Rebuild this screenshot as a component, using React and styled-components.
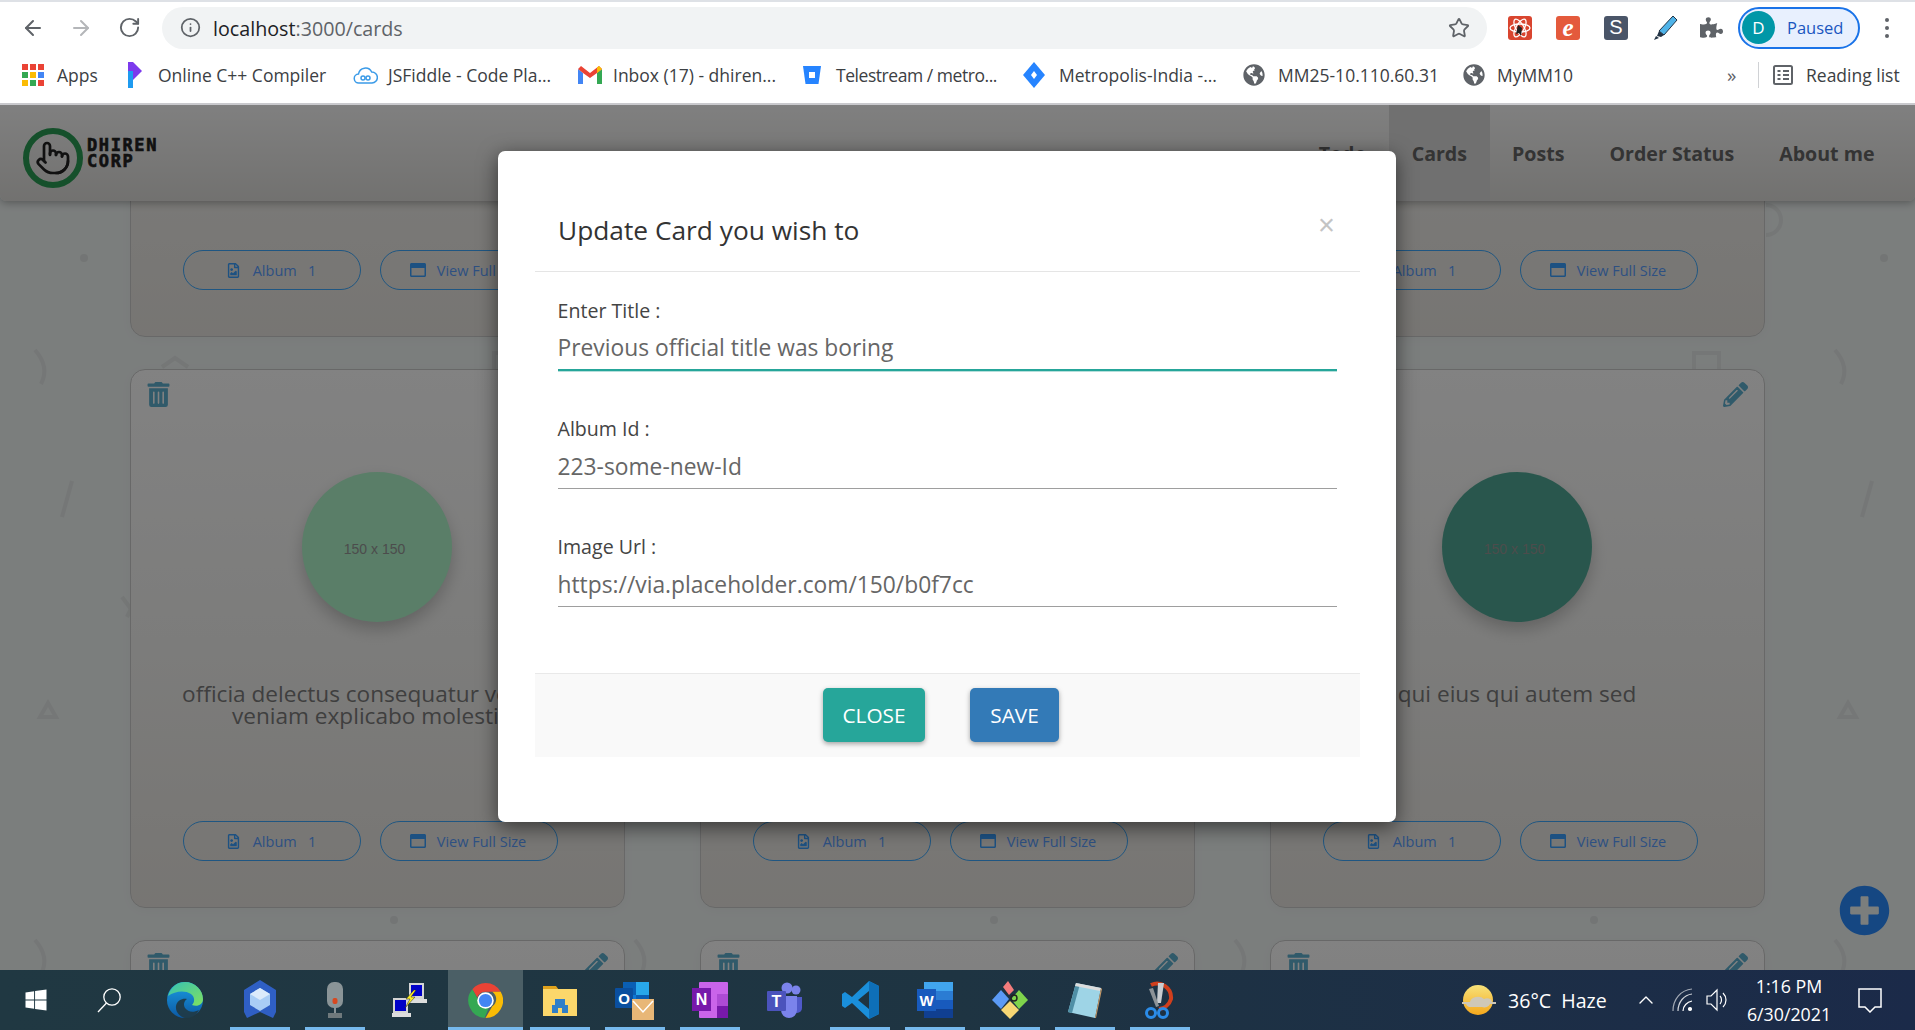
import React from "react";
import styled, { createGlobalStyle } from "styled-components";
import { ArrowLeft, ArrowRight, RotateCw, Info, Star, Pointer, ChevronUp } from "lucide-react";
import {
  FaTrashAlt, FaPencilAlt, FaRegFileImage, FaRegWindowMaximize, FaPlusCircle,
  FaPuzzlePiece, FaGlobeAmericas, FaWindows,
} from "react-icons/fa";

const UI = `"Open Sans", "Noto Sans", "Liberation Sans", sans-serif`;

const Global = createGlobalStyle`
  html, body { margin: 0; padding: 0; overflow: hidden; background: #fff; }
  * { box-sizing: border-box; }
`;

const Root = styled.div`
  width: 1915px; height: 1030px; display: flex; flex-direction: column;
  overflow: hidden; font-family: ${UI};
`;

/* ---------- browser chrome ---------- */
const Chrome = styled.header`
  height: 105px; flex: none; background: #fff; display: flex; flex-direction: column;
  border-top: 2px solid #dee1e6; border-bottom: 2px solid #c9c9cd;
`;
const Toolbar = styled.div`
  height: 48px; flex: none; display: flex; align-items: center; padding: 3px 0 0 0;
`;
const NavIcon = styled.span`
  width: 48px; flex: none; display: flex; justify-content: center; color: ${p => p.$c || "#5f6368"};
`;
const NavIcons = styled.div`
  width: 162px; flex: none; display: flex; padding-left: 9px;
`;
const UrlBar = styled.div`
  width: 1325px; height: 42px; flex: none; border-radius: 21px; background: #f1f3f4;
  display: flex; align-items: center; padding: 0 17px 0 18px; color: #5f6368;
`;
const UrlText = styled.div`
  margin-left: 12px; padding-top: 1px; font-size: 19.7px; color: #5f6368; flex: 1; white-space: nowrap;
  b { font-weight: 400; color: #202124; }
`;
const ExtRow = styled.div`
  display: flex; align-items: center; margin-left: 21px; height: 42px;
`;
const ExtSlot = styled.div`
  width: 48px; flex: none; display: flex; align-items: center; justify-content: flex-start;
`;
const ExtTile = styled.div`
  width: 24px; height: 24px; border-radius: 3px; background: ${p => p.$bg}; color: #fff;
  display: flex; align-items: center; justify-content: center; font-size: ${p => p.$fs || 18}px;
  font-style: ${p => p.$it ? "italic" : "normal"}; font-weight: ${p => p.$it ? 700 : 400};
  font-family: ${p => p.$it ? `"Liberation Serif", serif` : `"Liberation Sans", sans-serif`}; overflow: hidden;
`;
const Profile = styled.div`
  width: 122px; height: 42px; margin-left: -10px; flex: none; border-radius: 21px; border: 2px solid #1a73e8; background: #e8f0fe;
  display: flex; align-items: center; padding-left: 2px;
`;
const Avatar = styled.div`
  width: 33px; height: 33px; border-radius: 50%; background: #0097a7; color: #fff;
  display: flex; align-items: center; justify-content: center; font-size: 17px;
`;
const PausedText = styled.span`
  margin-left: 12px; color: #1a56c0; font-size: 16.5px;
`;
const Kebab = styled.div`
  margin-left: 25px; display: flex; flex-direction: column; gap: 4px;
  i { width: 4px; height: 4px; border-radius: 50%; background: #5f6368; display: block; }
`;
const Bookmarks = styled.div`
  flex: 1; display: flex; align-items: center; padding: 0 0 3px 22px; font-size: 17.5px; color: #3c4043;
`;
const Bookmark = styled.div`
  width: ${p => p.$w}px; flex: none; display: flex; align-items: center; white-space: nowrap;
  svg { flex: none; }
`;
const BookmarkLabel = styled.span`
  margin-left: ${p => p.$ml || 12}px; white-space: nowrap; letter-spacing: ${p => p.$ls || 0}px;
`;
const Overflow = styled.span`
  width: 31px; flex: none; color: #5f6368; font-size: 19px;
`;
const Divider = styled.div`
  width: 1px; height: 26px; background: #d0d2d5; margin-right: 13px;
`;

/* ---------- page ---------- */
const Viewport = styled.main`
  flex: 1; position: relative; overflow: hidden; background: #f2f7f6; display: flex; flex-direction: column;
`;
const Doodles = styled.svg`
  position: absolute; inset: 0; width: 100%; height: 100%;
`;
const SiteNav = styled.nav`
  height: 96px; flex: none; position: relative; z-index: 2; display: flex; justify-content: space-between;
  background: linear-gradient(#fbfbfb, #dfdedb); border-radius: 0 0 6px 6px;
  box-shadow: 0 2px 8px rgba(0,0,0,.3); padding-right: 18px;
`;
const Brand = styled.div`
  display: flex; align-items: center; padding-left: 23px; gap: 4px; position: relative; top: 5px;
`;
const BrandRing = styled.div`
  width: 60px; height: 60px; border-radius: 50%; border: 6px solid #2a9d55; display: flex; align-items: center; justify-content: center;
  color: #222;
`;
const BrandText = styled.div`
  font-family: "DejaVu Sans Mono", monospace; font-weight: 700; font-size: 17px; line-height: 16px; color: #222; letter-spacing: 1.6px;
  -webkit-text-stroke: .6px #222; position: relative; top: -5px;
`;
const NavLinks = styled.div`
  display: flex; align-items: stretch;
`;
const NavLink = styled.a`
  display: flex; align-items: center; padding: 1px 22.5px 0; font-size: 19.6px; font-weight: 700; color: #666;
  background: ${p => p.$active ? "#dcdcdc" : "transparent"}; white-space: nowrap;
`;
const Scroller = styled.div`
  flex: 1; overflow: hidden; position: relative;
`;
const CardGrid = styled.div`
  display: grid; grid-template-columns: repeat(3, 495px); column-gap: 75px; row-gap: 32px;
  padding-left: 130px; margin-top: -403px;
`;
const Card = styled.article`
  height: 539px; border: 1px solid #ccc; border-radius: 15px; background: linear-gradient(#fff, #f4f4f2 50%, #e9e6e1);
  padding: 12px 16px 46px 15px; display: flex; flex-direction: column; align-items: center;
  box-shadow: 0 2px 12px rgba(0,0,0,.03);
`;
const CardTools = styled.div`
  width: 100%; height: 25px; flex: none; display: flex; justify-content: space-between; color: #5fb0d0; font-size: 25px;
`;
const Thumb = styled.div`
  width: 150px; height: 150px; flex: none; border-radius: 50%; margin-top: 65px; background: ${p => p.$c};
  display: flex; align-items: center; justify-content: center; color: #969696; font: 14px "Liberation Sans", sans-serif;
  box-shadow: 0 8px 16px rgba(0,0,0,.2); padding-right: 5px; padding-top: 3px;
`;
const CardTitle = styled.h3`
  margin: 61px 0 0; font-size: 22.6px; line-height: 22px; font-weight: 400; color: #7c7c7c; text-align: center; width: 410px;
`;
const CardActions = styled.div`
  margin-top: auto; display: flex; gap: 19px; align-self: flex-start; margin-left: 37px;
`;
const PillButton = styled.button`
  width: 178px; height: 40px; border: 1.5px solid #3eaaff; border-radius: 20px; background: transparent; color: #5a9eff;
  font: 14.5px ${UI}; display: flex; align-items: center; justify-content: center; gap: ${p => p.$gap}px; padding: 0 2px 0 0;
  svg { color: #3aa0ff; flex: none; }
`;
const Fab = styled.div`
  position: absolute; right: 25px; top: 780px; width: 51px; height: 51px; color: #2a8cff; font-size: 51px; line-height: 0; z-index: 3;
  border-radius: 50%;
`;

/* ---------- modal ---------- */
const Backdrop = styled.div`
  position: absolute; inset: 0; background: rgba(0,0,0,.49); z-index: 5; padding: 46px 0 0 498px;
`;
const Modal = styled.section`
  width: 898px; height: 671px; background: #fff; border-radius: 7px; padding: 0 36px 0 37px;
  box-shadow: 0 5px 20px rgba(0,0,0,.55); display: flex; flex-direction: column;
`;
const ModalHeader = styled.div`
  height: 121px; flex: none; border-bottom: 1px solid #e5e5e5; padding: 0 25px 0 23px; display: flex; justify-content: space-between;
`;
const ModalTitle = styled.h2`
  margin: 62px 0 0; font-size: 26.3px; line-height: 34px; font-weight: 500; color: #333;
`;
const CloseX = styled.span`
  margin-top: 56px; font-size: 29px; line-height: 36px; color: #c4c4c4; font-family: "Liberation Sans", sans-serif;
`;
const ModalBody = styled.div`
  height: 401px; flex: none; padding: 27px 23px 0 22.500px;
`;
const Field = styled.div`
  height: 70px; margin-bottom: 48px; display: flex; flex-direction: column;
`;
const FieldLabel = styled.label`
  height: 25px; flex: none; font-size: 19.6px; line-height: 24px; color: #444;
`;
const FieldInput = styled.input`
  height: 47px; flex: none; width: 100%; border: 0; outline: 0; padding: 2px 0 0; background: transparent;
  font: 22.8px ${UI}; color: #666;
  border-bottom: ${p => p.$focused ? "2px solid #26a69a" : "1px solid #9e9e9e"};
  box-shadow: ${p => p.$focused ? "0 1px 0 #b6dfdb" : "none"};
`;
const ModalFooter = styled.div`
  height: 84px; flex: none; background: #f9f9f9; border-top: 1px solid #e9e9e9; display: flex; justify-content: center;
  align-items: flex-start; padding: 14px 13px 0 0; gap: 45px;
`;
const ActionButton = styled.button`
  height: 54px; width: ${p => p.$w}px; border: 0; border-radius: 5px; background: ${p => p.$bg}; color: #fff;
  font: 20.8px ${UI}; padding: 0; text-transform: uppercase; box-shadow: 0 2px 5px rgba(0,0,0,.35);
`;

/* ---------- taskbar ---------- */
const Taskbar = styled.footer`
  height: 60px; flex: none; display: flex; align-items: stretch; color: #fff;
  background: linear-gradient(90deg, #203842, #1e3442 50%, #1b2a49);
`;
const TaskStart = styled.div`
  width: 72px; flex: none; display: flex; align-items: center; justify-content: center;
  &:nth-child(2) { width: 75.5px; }
`;
const TaskCell = styled.div`
  width: 75px; flex: none; position: relative; display: flex; align-items: center; justify-content: center;
  background: ${p => p.$active ? "#4b5f66" : "transparent"};
  &::after {
    content: ""; display: ${p => p.$open ? "block" : "none"}; position: absolute; bottom: 0; height: 3px;
    left: ${p => p.$active ? 0 : 7}px; right: ${p => p.$active ? 0 : 8}px; background: #76b9ed;
  }
`;
const Tray = styled.div`
  margin-left: auto; display: flex; align-items: center; padding-right: 33px;
`;
const TrayGap = styled.span`
  width: ${p => p.$w}px; flex: none;
`;
const Weather = styled.span`
  margin-left: 12px; width: 126px; font-size: 19.6px; white-space: nowrap; word-spacing: 5px;
`;
const Clock = styled.div`
  width: 116px; margin-left: 13px; text-align: center; font-size: 17.8px; line-height: 28px; padding-right: 22px; white-space: nowrap;
`;

/* ---------- drawn icons ---------- */
const AppsIcon = () => (
  <svg width="22" height="22" viewBox="0 0 22 22">
    {[["#ea4335","#ea4335","#ea4335"],["#34a853","#fbbc05","#4285f4"],["#fbbc05","#34a853","#ea4335"]].map((r, y) =>
      r.map((c, x) => <rect key={x + "" + y} x={x * 8} y={y * 8} width="6" height="6" fill={c} />))}
  </svg>
);
const PIcon = () => (
  <svg width="20" height="28" viewBox="0 0 20 28">
    <path d="M3 1h5l9 9-9 9H3z" fill="#7c3aed" />
    <path d="M3 10l5 0 0 17H3z" fill="#1e9bf0" />
  </svg>
);
const CloudIcon = () => (
  <svg width="25" height="22" viewBox="0 0 25 22" fill="none" stroke="#3b9be8" strokeWidth="1.5">
    <path d="M6 19a4.5 4.5 0 0 1-.5-9A7 7 0 0 1 18.7 8 5.5 5.5 0 0 1 19 19z" />
    <circle cx="10" cy="14" r="2" /><circle cx="15" cy="14" r="2" />
  </svg>
);
const GmailIcon = () => (
  <svg width="24" height="18" viewBox="0 0 24 18">
    <path d="M0 3v15h5V7z" fill="#4285f4" /><path d="M24 3v15h-5V7z" fill="#34a853" />
    <path d="M0 3l5 4 7 5 7-5 5-4-3-3-9 7-9-7z" fill="#ea4335" /><path d="M19 7l5-4-3-3-2 1.500z" fill="#fbbc05" />
  </svg>
);
const BucketIcon = () => (
  <svg width="18" height="20" viewBox="0 0 18 20">
    <path d="M0 1h18l-2.500 18h-13z" fill="#2684ff" /><rect x="6" y="7" width="6" height="6" fill="#fff" />
  </svg>
);
const DiamondIcon = () => (
  <svg width="24" height="26" viewBox="0 0 24 26">
    <path d="M12 0l11 13-11 13L1 13z" fill="#2684ff" /><path d="M12 9l3 4-3 4-3-4z" fill="#fff" />
  </svg>
);
const ReadingIcon = () => (
  <svg width="22" height="22" viewBox="0 0 22 22" fill="none" stroke="#5f6368" strokeWidth="2">
    <rect x="2" y="2" width="18" height="18" rx="1.500" /><path d="M5.500 7h3M11 7h6M5.500 11h3M11 11h6M5.500 15h3M11 15h6" />
  </svg>
);
const AtomIcon = () => (
  <svg width="24" height="24" viewBox="0 0 24 24" fill="none" stroke="#fff" strokeWidth="1.300">
    <ellipse cx="12" cy="12" rx="10" ry="4" transform="rotate(60 12 12)" />
    <ellipse cx="12" cy="12" rx="10" ry="4" transform="rotate(-60 12 12)" />
    <ellipse cx="12" cy="12" rx="10" ry="4" />
    <path d="M10 9l4 3-1 8-2-3-3 1z" fill="#222" stroke="none" />
  </svg>
);
const MarkerIcon = () => (
  <svg width="26" height="26" viewBox="0 0 26 26">
    <path d="M21 1l4 4-13 15-5-4z" fill="#4fb3e8" stroke="#234" strokeWidth="1" />
    <path d="M7 16l5 4-3 2-4-1z" fill="#234" /><path d="M4 21l3 2-5 2z" fill="#234" />
  </svg>
);
const MagnifierIcon = () => (
  <svg width="25" height="26" viewBox="0 0 25 26" fill="none" stroke="#fff" strokeWidth="1.300">
    <circle cx="15" cy="10" r="8.200" /><path d="M9.500 16L1 25" />
  </svg>
);
const EdgeIcon = () => (
  <svg width="36" height="38" viewBox="0 0 36 38">
    <defs>
      <linearGradient id="edgeA" x1="0" y1="0" x2="1" y2="1"><stop offset="0" stopColor="#36c2b4" /><stop offset="1" stopColor="#7fe060" /></linearGradient>
      <linearGradient id="edgeB" x1="0" y1="0" x2="0" y2="1"><stop offset="0" stopColor="#1b9de2" /><stop offset="1" stopColor="#0c59a4" /></linearGradient>
    </defs>
    <circle cx="18" cy="19" r="18" fill="url(#edgeB)" />
    <path d="M1 15C4 5 11 1 18 1c10 0 18 8 18 17 0 6-6 8-11 6 3-3 3-8-1-11-6-4-16-3-23 2z" fill="url(#edgeA)" />
    <path d="M24 37c-8 2-16-4-15-12 1-6 7-8 11-7-3 2-4 6-2 9 3 4 8 5 14 2-2 4-5 7-8 8z" fill="#203842" opacity=".9" />
  </svg>
);
const HexIcon = () => (
  <svg width="32" height="40" viewBox="0 0 32 40">
    <path d="M16 0l16 10v22l-3 6-13-6-13 6-3-6V10z" fill="#2f5fc4" />
    <path d="M16 8l10 6v11l-10 6-10-6V14z" fill="#a9cdf5" /><path d="M16 8l10 6-10 6-10-6z" fill="#dcebfb" />
  </svg>
);
const MicIcon = () => (
  <svg width="20" height="36" viewBox="0 0 20 36">
    <rect x="2" y="0" width="16" height="26" rx="7" fill="#8a9497" /><rect x="7.500" y="16" width="5" height="6" rx="2" fill="#d8481f" />
    <path d="M9 26h2v6H9z" fill="#8a9497" /><rect x="3" y="31" width="14" height="5" fill="#6f797c" />
  </svg>
);
const PuttyIcon = () => (
  <svg width="36" height="36" viewBox="0 0 36 36">
    <rect x="17" y="1" width="15" height="16" fill="#d5d5d5" /><rect x="19" y="3" width="11" height="11" fill="#0000c8" /><rect x="15" y="17" width="20" height="4" fill="#ddd" />
    <rect x="1" y="16" width="15" height="16" fill="#d5d5d5" /><rect x="3" y="18" width="11" height="11" fill="#0000c8" /><rect x="0" y="31" width="19" height="4" fill="#ddd" />
    <path d="M22 8l-8 9 4 0-5 9 10-11-4 0 5-7z" fill="#fcee21" stroke="#222" strokeWidth=".5" />
  </svg>
);
const ChromeIcon = () => (
  <svg width="35" height="35" viewBox="0 0 36 36">
    <path d="M18 0a18 18 0 0 1 15.600 9H18a9 9 0 0 0-8.500 6L4.500 6.500A18 18 0 0 1 18 0z" fill="#ea4335" />
    <path d="M4.500 6.500l8 14a9 9 0 0 0 9.500 3.600L17 36A18 18 0 0 1 4.500 6.500z" fill="#34a853" />
    <path d="M33.600 9A18 18 0 0 1 18 36l7-12a9 9 0 0 0 0-15z" fill="#fbbc05" />
    <circle cx="18" cy="18" r="8.500" fill="#fff" /><circle cx="18" cy="18" r="6.800" fill="#4285f4" />
  </svg>
);
const FolderIcon = () => (
  <svg width="34" height="32" viewBox="0 0 34 32">
    <path d="M0 2h13l3 4H0z" fill="#e0a21c" /><path d="M0 5h34v27H0z" fill="#fbd76b" />
    <path d="M12 15h10v6h3v8h-6v-5h-4v5H9v-8h3z" fill="#2f7fc8" />
  </svg>
);
const OutlookIcon = () => (
  <svg width="40" height="40" viewBox="0 0 40 40">
    <rect x="8" y="2" width="26" height="26" fill="#0a5fb4" /><rect x="21" y="2" width="13" height="13" fill="#28a8ea" /><rect x="8" y="15" width="13" height="13" fill="#0f78d4" />
    <rect x="0" y="8" width="18" height="20" rx="1" fill="#0a4f9f" />
    <text x="9" y="24" fontSize="15" fontWeight="700" textAnchor="middle" fill="#fff" fontFamily="Liberation Sans">O</text>
    <rect x="17" y="19" width="22" height="21" fill="#e8b777" /><path d="M18 21l10 11 10-11" fill="none" stroke="#fff" strokeWidth="1.500" />
  </svg>
);
const OneNoteIcon = () => (
  <svg width="36" height="36" viewBox="0 0 36 36">
    <rect x="7" y="0" width="29" height="36" rx="1" fill="#ca64ea" /><rect x="25" y="12" width="11" height="12" fill="#ae4bd5" /><rect x="25" y="24" width="11" height="12" fill="#7719aa" />
    <rect x="0" y="6" width="19" height="23" fill="#7719aa" />
    <text x="9.500" y="23" fontSize="16" fontWeight="700" textAnchor="middle" fill="#fff" fontFamily="Liberation Sans">N</text>
  </svg>
);
const TeamsIcon = () => (
  <svg width="36" height="36" viewBox="0 0 36 36">
    <circle cx="29" cy="8" r="4.500" fill="#7b83eb" /><circle cx="20" cy="6" r="5.500" fill="#7b83eb" />
    <path d="M25 15h10v11a5 5 0 0 1-10 0z" fill="#5059c9" /><path d="M12 14h18v14a8 8 0 0 1-16 0z" fill="#7b83eb" />
    <rect x="0" y="9" width="19" height="20" rx="1" fill="#4b53bc" />
    <text x="9.500" y="25" fontSize="16" fontWeight="700" textAnchor="middle" fill="#fff" fontFamily="Liberation Sans">T</text>
  </svg>
);
const VsCodeIcon = () => (
  <svg width="37" height="38" viewBox="0 0 37 38">
    <path d="M27 0l10 5v28l-10 5L10 22 3 27 0 25V13l3-2 7 5zm0 10L16 19l11 9z" fill="#1a8fdb" />
    <path d="M27 0l10 5v28l-10 5z" fill="#0e6fb8" />
  </svg>
);
const WordIcon = () => (
  <svg width="36" height="36" viewBox="0 0 36 36">
    <rect x="7" y="0" width="29" height="36" rx="1" fill="#2b7cd3" /><rect x="7" y="0" width="29" height="9" fill="#41a5ee" /><rect x="7" y="18" width="29" height="9" fill="#185abd" /><rect x="7" y="27" width="29" height="9" fill="#103f91" />
    <rect x="0" y="7" width="19" height="22" fill="#185abd" />
    <text x="9.500" y="24" fontSize="15" fontWeight="700" textAnchor="middle" fill="#fff" fontFamily="Liberation Sans">W</text>
  </svg>
);
const GemIcon = () => (
  <svg width="36" height="38" viewBox="0 0 36 38">
    <path d="M11 6l5-6 6 9-5 5z" fill="#f47c7c" /><path d="M0 19l9-10 8 9-8 10z" fill="#5b9af5" />
    <path d="M19 18l8-9 9 10-9 9z" fill="#7fd44c" /><path d="M9 29l9-9 9 9-9 9z" fill="#f7d774" />
    <circle cx="22" cy="17" r="3" fill="none" stroke="#222" strokeWidth="1.500" />
  </svg>
);
const NotepadIcon = () => (
  <svg width="34" height="36" viewBox="0 0 34 36">
    <path d="M8 1l25 5-6 30L0 30z" fill="#9ed4e6" /><path d="M0 30l8-29 4 1-8 29z" fill="#4f8fa6" />
    <path d="M8 1l25 5-1 3L7 4z" fill="#dcdcdc" /><path d="M27 36l6-30 1 1-6 29z" fill="#c89b6a" />
  </svg>
);
const SnipIcon = () => (
  <svg width="30" height="38" viewBox="0 0 30 38">
    <path d="M6 4a14 14 0 0 1 20 14 14 14 0 0 1-12 10" fill="none" stroke="#d13f1d" strokeWidth="4" />
    <path d="M13 2l6 0-3 20-4 0z" fill="#c8ccd0" /><path d="M4 8l4-1 6 18-3 1z" fill="#8c9297" />
    <circle cx="6" cy="32" r="4.500" fill="none" stroke="#2b8ce8" strokeWidth="3" /><circle cx="18" cy="32" r="4.500" fill="none" stroke="#2b8ce8" strokeWidth="3" />
  </svg>
);
const SunIcon = () => (
  <svg width="34" height="34" viewBox="0 0 34 34">
    <defs><linearGradient id="sunG" x1="0" y1="0" x2="0" y2="1"><stop offset="0" stopColor="#f7e27a" /><stop offset="1" stopColor="#f5a81c" /></linearGradient></defs>
    <circle cx="16" cy="17" r="15" fill="url(#sunG)" />
    <path d="M0 19h8a8 6 0 0 1 14-3 5 4 0 0 1 8 3h4v2h-6a6 5 0 0 1-8 3H7a5 4 0 0 1-3-3H0z" fill="#cfc8b8" />
  </svg>
);
const WifiIcon = () => (
  <svg width="21" height="24" viewBox="0 0 21 24" fill="none" stroke="#fff" strokeWidth="1.200">
    <path d="M1 23C1 11 9 2 20 1" opacity=".6" /><path d="M6 23C6 14 12 7 20 6" opacity=".8" /><path d="M11 23c0-5 4-9 9-10" />
    <circle cx="18" cy="21" r="1.500" fill="#fff" />
  </svg>
);
const VolumeIcon = () => (
  <svg width="23" height="24" viewBox="0 0 23 24" fill="none" stroke="#fff" strokeWidth="1.200">
    <path d="M1 8h4l6-6v20l-6-6H1z" /><path d="M14 8c2 2 2 6 0 8M17 5c4 4 4 10 0 14" />
  </svg>
);
const NotifyIcon = () => (
  <svg width="24" height="25" viewBox="0 0 24 25" fill="none" stroke="#fff" strokeWidth="1.500">
    <path d="M1 1h22v18h-6l-5 5-5-5H1z" />
  </svg>
);

/* ---------- data ---------- */
const cards = [
  { title: "culpa odio esse rerum omnis laboriosam voluptate repudiandae", color: "#d32776" },
  { title: "natus nisi omnis corporis facere molestiae rerum in", color: "#f66b97" },
  { title: "accusamus ea aliquid et amet sequi nemo", color: "#56a8c2" },
  { title: "officia delectus consequatur vero aut veniam explicabo molestias", color: "#b0f7cc" },
  { title: "aut porro officiis laborum odit ea laudantium corporis", color: "#54176f" },
  { title: "qui eius qui autem sed", color: "#51aa97" },
  { title: "beatae et provident et ut vel", color: "#810b14" },
  { title: "nihil at amet non hic quia qui", color: "#1ee8a4" },
  { title: "mollitia soluta ut rerum eos aliquam", color: "#66b7d2" },
];

const bookmarks = [
  { w: 103, icon: <AppsIcon />, label: "Apps", ml: 13 },
  { w: 228, icon: <PIcon />, label: "Online C++ Compiler", ml: 13 },
  { w: 225, icon: <CloudIcon />, label: "JSFiddle - Code Pla...", ml: 10 },
  { w: 225, icon: <GmailIcon />, label: "Inbox (17) - dhiren...", ml: 11 },
  { w: 219, icon: <BucketIcon />, label: "Telestream / metro...", ml: 15, ls: -0.45 },
  { w: 221, icon: <DiamondIcon />, label: "Metropolis-India -...", ml: 13 },
  { w: 220, icon: <FaGlobeAmericas size={22} color="#5f6368" />, label: "MM25-10.110.60.31", ml: 13 },
  { w: 264, icon: <FaGlobeAmericas size={22} color="#5f6368" />, label: "MyMM10", ml: 12 },
];

const apps = [
  { icon: <EdgeIcon /> }, { icon: <HexIcon />, open: true }, { icon: <MicIcon />, open: true },
  { icon: <PuttyIcon /> }, { icon: <ChromeIcon />, open: true, active: true }, { icon: <FolderIcon />, open: true },
  { icon: <OutlookIcon />, open: true }, { icon: <OneNoteIcon />, open: true }, { icon: <TeamsIcon /> },
  { icon: <VsCodeIcon />, open: true }, { icon: <WordIcon />, open: true }, { icon: <GemIcon />, open: true },
  { icon: <NotepadIcon />, open: true }, { icon: <SnipIcon />, open: true },
];

const fields = [
  { label: "Enter Title :", value: "Previous official title was boring", focused: true },
  { label: "Album Id :", value: "223-some-new-Id" },
  { label: "Image Url :", value: "https://via.placeholder.com/150/b0f7cc" },
];

const doodleStroke = { fill: "none", stroke: "rgba(0,0,0,.05)", strokeWidth: 4 };

export default function App() {
  return (
    <Root>
      <Global />
      <Chrome>
        <Toolbar>
          <NavIcons>
            <NavIcon><ArrowLeft size={24} strokeWidth={2} /></NavIcon>
            <NavIcon $c="#b4b6b9"><ArrowRight size={24} strokeWidth={2} /></NavIcon>
            <NavIcon><RotateCw size={23} strokeWidth={2} /></NavIcon>
          </NavIcons>
          <UrlBar>
            <Info size={21} />
            <UrlText><b>localhost</b>:3000/cards</UrlText>
            <Star size={22} strokeWidth={2} />
          </UrlBar>
          <ExtRow>
            <ExtSlot><ExtTile $bg="#d9452f"><AtomIcon /></ExtTile></ExtSlot>
            <ExtSlot><ExtTile $bg="#e45a3c" $it $fs={25}>e</ExtTile></ExtSlot>
            <ExtSlot><ExtTile $bg="#4a5568" $fs={20}>S</ExtTile></ExtSlot>
            <ExtSlot><MarkerIcon /></ExtSlot>
            <ExtSlot><FaPuzzlePiece size={23} color="#5f6368" /></ExtSlot>
            <Profile>
              <Avatar>D</Avatar>
              <PausedText>Paused</PausedText>
            </Profile>
            <Kebab><i /><i /><i /></Kebab>
          </ExtRow>
        </Toolbar>
        <Bookmarks>
          {bookmarks.map(b => (
            <Bookmark key={b.label} $w={b.w}>
              {b.icon}
              <BookmarkLabel $ml={b.ml} $ls={b.ls}>{b.label}</BookmarkLabel>
            </Bookmark>
          ))}
          <Overflow>»</Overflow>
          <Divider />
          <ReadingIcon />
          <BookmarkLabel $ml={12}>Reading list</BookmarkLabel>
        </Bookmarks>
      </Chrome>

      <Viewport>
        <Doodles aria-hidden="true">
          <defs>
            <pattern id="doodle" width="600" height="1000" patternUnits="userSpaceOnUse">
              <circle cx="84" cy="153" r="4" fill="rgba(0,0,0,.07)" />
              <path d="M35 245Q50 262 41 279" {...doodleStroke} />
              <path d="M72 376L62 412" {...doodleStroke} />
              <path d="M40 612l8-14 8 14z" {...doodleStroke} />
              <path d="M122 492l9 12-4 8" {...doodleStroke} />
              <path d="M162 262l13-9 13 9" {...doodleStroke} />
              <rect x="494" y="248" width="25" height="25" {...doodleStroke} />
              <path d="M566 100a15 15 0 0 1 0 30" {...doodleStroke} />
              <circle cx="394" cy="815" r="4" fill="rgba(0,0,0,.07)" />
              <path d="M35 835Q50 852 41 869" {...doodleStroke} />
            </pattern>
          </defs>
          <rect width="100%" height="100%" fill="url(#doodle)" />
        </Doodles>
        <SiteNav>
          <Brand>
            <BrandRing><Pointer size={36} strokeWidth={1.8} /></BrandRing>
            <BrandText>DHIREN<br />CORP</BrandText>
          </Brand>
          <NavLinks>
            <NavLink>Todo</NavLink>
            <NavLink $active>Cards</NavLink>
            <NavLink>Posts</NavLink>
            <NavLink>Order Status</NavLink>
            <NavLink>About me</NavLink>
          </NavLinks>
        </SiteNav>
        <Scroller>
          <CardGrid>
            {cards.map(c => (
              <Card key={c.title}>
                <CardTools><FaTrashAlt /><FaPencilAlt /></CardTools>
                <Thumb $c={c.color}>150 x 150</Thumb>
                <CardTitle>{c.title}</CardTitle>
                <CardActions>
                  <PillButton $gap={12}><FaRegFileImage size={15} />Album &nbsp;&nbsp;1</PillButton>
                  <PillButton $gap={11}><FaRegWindowMaximize size={16} />View Full Size</PillButton>
                </CardActions>
              </Card>
            ))}
          </CardGrid>
        </Scroller>
        <Fab><FaPlusCircle /></Fab>
        <Backdrop>
          <Modal>
            <ModalHeader>
              <ModalTitle>Update Card you wish to</ModalTitle>
              <CloseX>×</CloseX>
            </ModalHeader>
            <ModalBody>
              {fields.map(f => (
                <Field key={f.label}>
                  <FieldLabel>{f.label}</FieldLabel>
                  <FieldInput readOnly value={f.value} $focused={f.focused} />
                </Field>
              ))}
            </ModalBody>
            <ModalFooter>
              <ActionButton $bg="#26a69a" $w={102}>Close</ActionButton>
              <ActionButton $bg="#337ab7" $w={89}>Save</ActionButton>
            </ModalFooter>
          </Modal>
        </Backdrop>
      </Viewport>

      <Taskbar>
        <TaskStart><FaWindows size={24} /></TaskStart>
        <TaskStart><MagnifierIcon /></TaskStart>
        {apps.map((a, i) => (
          <TaskCell key={i} $open={a.open} $active={a.active}>{a.icon}</TaskCell>
        ))}
        <Tray>
          <SunIcon />
          <Weather>36°C Haze</Weather>
          <ChevronUp size={24} strokeWidth={1.4} />
          <TrayGap $w={14} />
          <WifiIcon />
          <TrayGap $w={13} />
          <VolumeIcon />
          <Clock>1:16 PM<br />6/30/2021</Clock>
          <NotifyIcon />
        </Tray>
      </Taskbar>
    </Root>
  );
}
